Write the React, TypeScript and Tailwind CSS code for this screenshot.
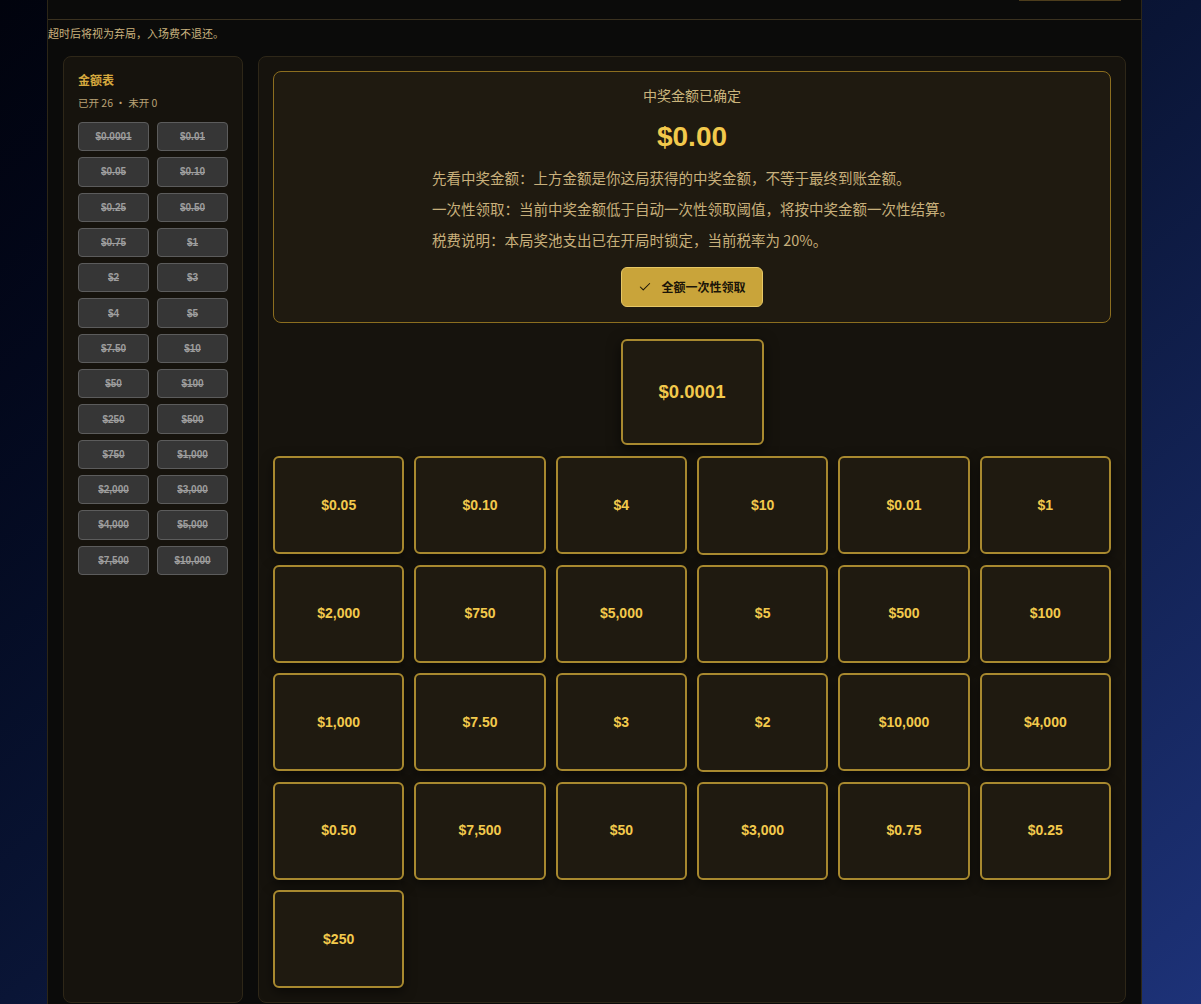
import { Check } from "lucide-react";

const ledger = [
  "$0.0001", "$0.01", "$0.05", "$0.10", "$0.25", "$0.50", "$0.75", "$1",
  "$2", "$3", "$4", "$5", "$7.50", "$10", "$50", "$100", "$250", "$500",
  "$750", "$1,000", "$2,000", "$3,000", "$4,000", "$5,000", "$7,500", "$10,000",
];

const cases = [
  "$0.05", "$0.10", "$4", "$10", "$0.01", "$1",
  "$2,000", "$750", "$5,000", "$5", "$500", "$100",
  "$1,000", "$7.50", "$3", "$2", "$10,000", "$4,000",
  "$0.50", "$7,500", "$50", "$3,000", "$0.75", "$0.25",
  "$250",
];

const notes = [
  "先看中奖金额：上方金额是你这局获得的中奖金额，不等于最终到账金额。",
  "一次性领取：当前中奖金额低于自动一次性领取阈值，将按中奖金额一次性结算。",
  "税费说明：本局奖池支出已在开局时锁定，当前税率为 20%。",
];

function CaseCard({ value }: { value: string }) {
  return (
    <div className="flex aspect-[4/3] items-center justify-center rounded-md border-2 border-[#a8892f] bg-[#1f1a10] shadow-[0_4px_12px_rgba(0,0,0,0.5)]">
      <span className="font-['Liberation_Sans',Arial,sans-serif] text-[14px] font-bold text-[#f2c94c]">
        {value}
      </span>
    </div>
  );
}

export default function App() {
  return (
    <div className="min-h-[1004px] w-full bg-gradient-to-br from-[#01030d] via-[#0a1536] to-[#1d3278] font-['Noto_Sans_CJK_SC','Noto_Sans',sans-serif]">
      <div className="ml-[47px] flex min-h-[1004px] w-[1095px] flex-col border-x border-[#2c2617] bg-[#0b0b0a]">
        {/* Header */}
        <div className="flex h-[20px] items-start justify-end border-b border-[#3b3220] pr-[20px]">
          <div className="h-[1px] w-[102px] bg-[#4d3d1c]" />
        </div>

        <p className="mt-[5px] text-[11px] leading-[16px] text-[#c9b27e]">
          超时后将视为弃局，入场费不退还。
        </p>

        <div className="mt-[15px] flex flex-1 gap-[15px] px-[15px] pb-[2px]">
          {/* Ledger */}
          <aside className="w-[180px] shrink-0 rounded-lg border border-[#2e2718] bg-[#16130d] px-[14px] pt-[14px]">
            <h2 className="text-[12px] font-bold leading-[18px] text-[#d6a93e]">金额表</h2>
            <p className="mt-[6px] text-[10.5px] leading-[16px] text-[#b9a275]">
              已开 26 · 未开 0
            </p>
            <div className="mt-[11px] grid grid-cols-2 gap-x-[8px] gap-y-[6px]">
              {ledger.map((v) => (
                <div
                  key={v}
                  className="flex h-[29.3px] items-center justify-center rounded-[4px] border border-[#5c5c5c] bg-[#363636] font-['Liberation_Sans',Arial,sans-serif] text-[10px] font-bold text-[#9d9d9d] line-through"
                >
                  {v}
                </div>
              ))}
            </div>
          </aside>

          {/* Board */}
          <main className="flex-1 rounded-lg border border-[#2e2718] bg-[#16130d] p-[14px]">
            <section className="rounded-lg border border-[#8c6e1f] bg-[#1f1a10] px-6 pb-[15px] pt-[13px] text-center">
              <p className="text-[14px] leading-[20px] text-[#cbb57c]">中奖金额已确定</p>
              <p className="mt-[15px] font-['Liberation_Sans',Arial,sans-serif] text-[28px] font-bold leading-[34px] text-[#f2c94c]">
                $0.00
              </p>
              <div className="mx-auto mt-[13px] w-[520px] space-y-[10px] text-left">
                {notes.map((n) => (
                  <p key={n} className="whitespace-nowrap text-[14.5px] leading-[21px] text-[#c8b07b]">
                    {n}
                  </p>
                ))}
              </div>
              <button className="mx-auto mt-[17px] flex h-[40px] items-center gap-[9px] rounded-md border border-[#e6c765] bg-[#c9a43a] px-[16px] text-[12px] font-bold text-[#1a1408]">
                <Check size={14} strokeWidth={1.8} />
                全额一次性领取
              </button>
            </section>

            <div className="mt-[16px] flex justify-center">
              <div className="flex h-[106px] w-[143px] items-center justify-center rounded-md border-2 border-[#a8892f] bg-[#1f1a10] shadow-[0_4px_14px_rgba(0,0,0,0.6)]">
                <span className="font-['Liberation_Sans',Arial,sans-serif] text-[18.5px] font-bold text-[#f2c94c]">
                  $0.0001
                </span>
              </div>
            </div>

            <div className="mt-[11px] grid grid-cols-6 gap-[10px]">
              {cases.map((v) => (
                <CaseCard key={v} value={v} />
              ))}
            </div>
          </main>
        </div>
      </div>
    </div>
  );
}
